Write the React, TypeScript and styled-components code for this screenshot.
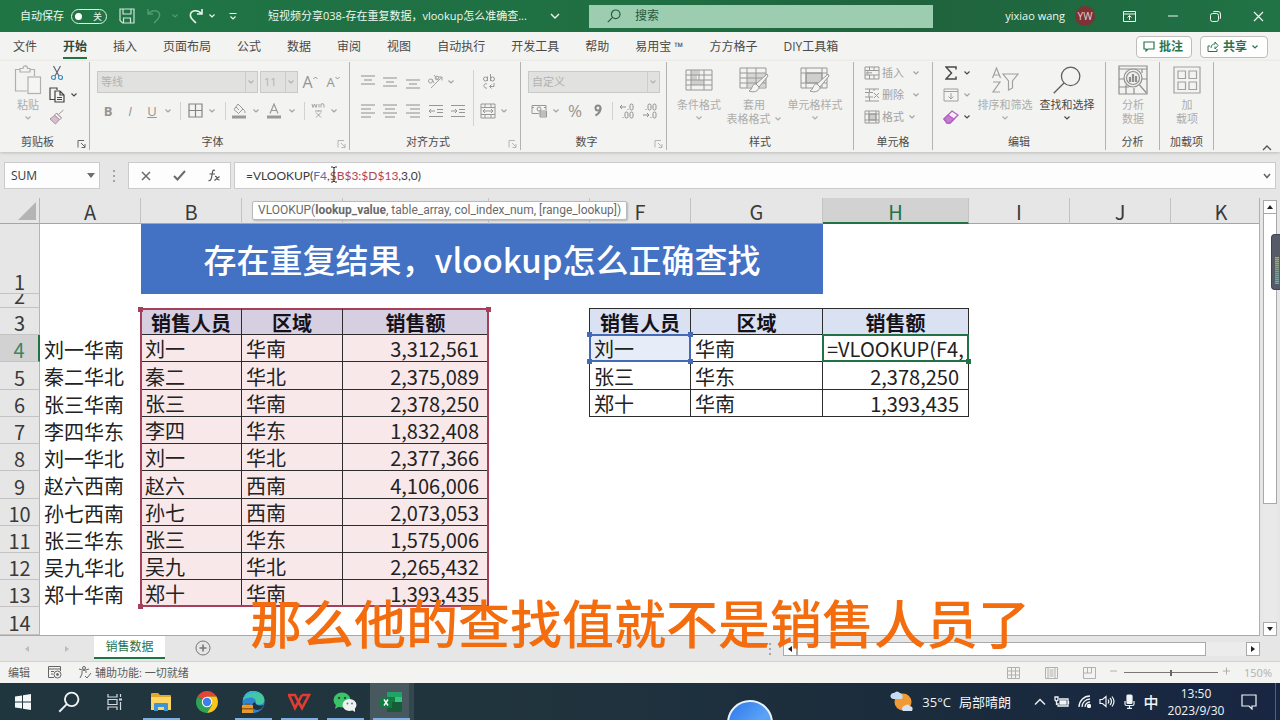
import React, { type ReactNode } from 'react';
import styled, { createGlobalStyle, css } from 'styled-components';

const GlobalStyle = createGlobalStyle`
  * { box-sizing: border-box; }
  html, body { margin: 0; height: 100%; }
  #root { height: 100%; }
  body {
    font-family: "Open Sans", "Noto Sans CJK SC", sans-serif;
    font-size: 12px;
    line-height: 16px;
    color: #3b3b3b;
  }
  button, input { font: inherit; color: inherit; }
  button { background: none; border: 0; padding: 0; cursor: pointer; }
`;

const GREEN = '#217346';
const DIM = '#adadab';

/* ---------- icons ---------- */

type IconProps = { w: number; h?: number; color?: string; sw?: number; children: ReactNode };

const Icon = ({ w, h = w, color = 'currentColor', sw = 1, children }: IconProps) => (
  <svg width={w} height={h} viewBox={`0 0 ${w} ${h}`} fill="none" stroke={color} strokeWidth={sw} aria-hidden="true">
    {children}
  </svg>
);

const Chevron = ({ color = 'currentColor' }: { color?: string }) => (
  <Icon w={8} h={6} color={color} sw={1.2}><path d="M1.5 1.5 4 4l2.500-2.500" /></Icon>
);

const Lines = ({ rows }: { rows: [number, number, number][] }) => (
  <Icon w={16} h={16} color="#8f8f8d">
    {rows.map(([x1, x2, y]) => <path key={y} d={`M${x1} ${y}H${x2}`} />)}
  </Icon>
);

const SaveIcon = () => (
  <Icon w={16} color="#cfe6d8" sw={1.2}><path d="M1 1h14v14H3.500L1 12.500zM4 1v5h8V1M4.500 15v-5h7v5" /></Icon>
);
const UndoIcon = () => (
  <Icon w={16} color="#4f9a70" sw={1.5}><path d="M2 1v5h5M2.500 6C5 2 12 1.500 13.500 6c1 3.500-2 5.500-5.500 9" /></Icon>
);
const RedoIcon = () => (
  <Icon w={16} color="#e4f3ea" sw={1.6}><path d="M14 1v5H9M13.500 6C11 2 4 1.500 2.500 6c-1 3.500 2 5.500 5.500 9" /></Icon>
);
const SearchIcon = ({ size = 14, color = '#245f3f', sw = 1.2 }: { size?: number; color?: string; sw?: number }) => (
  <svg width={size} height={size} viewBox="0 0 14 14" fill="none" stroke={color} strokeWidth={sw} aria-hidden="true">
    <circle cx="8.700" cy="5.300" r="4.300" /><path d="M5.600 8.400.800 13.200" />
  </svg>
);

const PasteIcon = () => (
  <Icon w={28} h={30} color="#b0b0ae" sw={1.2}>
    <path d="M13 26H1.500V4.500H6M16 4.500h4.500V11M6 7V3.500h3C9 0 13.500 0 13.500 3.500H16V7z" />
    <rect x="14" y="12" width="12.500" height="16.500" fill="#f5f6f4" />
  </Icon>
);
const CutIcon = () => (
  <Icon w={14} h={16} color="#5d6670" sw={1.2}>
    <path d="M3.500 1 9 11M10.500 1 5 11" />
    <circle cx="3.500" cy="12.500" r="2" stroke="#3d8fc4" /><circle cx="10.500" cy="12.500" r="2" stroke="#3d8fc4" />
  </Icon>
);
const CopyIcon = () => (
  <Icon w={16} h={16} color="#444" sw={1.2}>
    <path d="M5.500 12.500H1V1h7v2M6 4h5l4 4v7H6zM11 4v4h4M8 10.500h5M8 12.500h5" />
  </Icon>
);
const BrushIcon = () => (
  <Icon w={16} h={16} color="#a3969d">
    <path d="M14.500 1 10 5M7.500 4l5 5M7.500 4 5.500 6l5 5 2-2z" />
    <path d="M5.500 6.500 1 10l5.500 5 4-4.500z" fill="#dcbccb" />
  </Icon>
);
const BordersIcon = () => (
  <Icon w={15} color="#858583" sw={1.2}><path d="M1 1h13v13H1zM7.500 1v13M1 7.500h13" /></Icon>
);
const FillIcon = () => (
  <Icon w={16} h={16} color="#999997">
    <path d="m7 1 5 5-4.500 4.500L3 6.500zM5 4l3 3M12 6c2 2 2.500 3 1.500 4" /><path d="M1 14h14" strokeWidth={3} />
  </Icon>
);
const FontColorIcon = () => (
  <Icon w={16} h={16} color="#999997" sw={1.2}>
    <path d="M4 10.500 8 1l4 9.500M5.500 7.500h5" /><path d="M1 14h14" strokeWidth={3} />
  </Icon>
);
const OrientIcon = () => (
  <Icon w={18} h={16} color="#a2a2a0">
    <path d="M4 14 15 3M11.500 3H15v3.500" /><circle cx="3.500" cy="7" r="2" /><path d="m5 5 2 4M7 1l4 5" /><circle cx="10" cy="4" r="1.800" />
  </Icon>
);
const IndentIcon = ({ flip }: { flip?: boolean }) => (
  <Icon w={16} h={16} color="#979795">
    <path d="M1 2.500h14M9 6.500h6M9 9.500h6M1 13.500h14" />
    <path d={flip ? 'M1 8h6M5 6l2 2-2 2' : 'M7 8H1M3 6 1 8l2 2'} />
  </Icon>
);
const MergeIcon = () => (
  <Icon w={16} h={16} color="#979795"><path d="M1 1h14v14H1zM1 4.500h14M1 11.500h14M5 1v3.500M11 1v3.500M5 11.500V15M11 11.500V15M3 8h10M5 6 3 8l2 2M11 6l2 2-2 2" /></Icon>
);
const WrapIcon = () => (
  <Icon w={14} h={16} color="#979795">
    <circle cx="3.500" cy="5" r="2" /><path d="M5.500 2.500V7M8.500 0v7" /><circle cx="10.500" cy="5" r="2" />
    <path d="M5 10c-4-1.500-4 5 0 4M12 9v3.500H8M9.500 10.500 7.500 12.500l2 2" />
  </Icon>
);
const MoneyIcon = () => (
  <Icon w={17} h={14} color="#979795">
    <path d="M8 9.500H1v-8h14V6M1 3.500h2M13 3.500h2" /><circle cx="8" cy="5" r="2" />
    <path d="M9 7h6.500v6H9zM9 9h6.500M9 11h6.500" fill="#e5e5e3" />
  </Icon>
);
const CondIcon = () => (
  <Icon w={28} h={22} color="#979795">
    <path d="M6 1h9v5H6zM6 11h13v5H6zM6 6h6v5H6z" fill="#cfcfcd" stroke="none" />
    <path d="M1 1h26v20H1zM1 6h26M1 11h26M1 16h26M6 1v20M14 6v5M19 1v20" />
  </Icon>
);
const TableStyleIcon = () => (
  <Icon w={30} h={26} color="#979795">
    <path d="M8 6h19v14H8z" fill="#d6d6d4" stroke="none" />
    <path d="M1 1h26v20H1zM1 6h26M1 11h26M1 16h26M8 1v20M17 1v20" />
    <path d="m28 7-11 10 3 3L29 9zM17 17c-4-1-3 5-7 7 5 2 10 0 10-4z" fill="#f4f4f2" />
  </Icon>
);
const CellStyleIcon = () => (
  <Icon w={30} h={26} color="#979795">
    <path d="M6 6h16v10H6z" fill="#cfcfcd" />
    <path d="M1 1h26v20H1zM1 6h26M1 16h26M6 1v20M22 1v20" />
    <path d="m28 7-11 10 3 3L29 9zM17 17c-4-1-3 5-7 7 5 2 10 0 10-4z" fill="#f4f4f2" />
  </Icon>
);
const InsertCellsIcon = () => (
  <Icon w={16} h={14} color="#999997"><path d="M1 1h14v12H1zM1 4.500h14M1 9h14M5.500 1v3.500M10 1v3.500M5.500 9v4M10 9v4M8 6.800H2.500M4.500 5 2.500 6.800l2 2" /></Icon>
);
const DeleteCellsIcon = () => (
  <Icon w={16} h={14} color="#999997"><path d="M1 1h14M1 4.500h8M1 9h8M1 13h14M5.500 1v3.500M10 1v2M5.500 9v4M5 5v4M10 5l5 5M15 5l-5 5" /></Icon>
);
const FormatCellsIcon = () => (
  <Icon w={16} h={14} color="#999997"><path d="M5 4h7v6H5z" fill="#cdcdcb" /><path d="M1 1h14v12H1zM1 4h14M1 10h14M5 1v12M12 1v12" /></Icon>
);
const FillDownIcon = () => (
  <Icon w={16} h={14} color="#a0a09e"><path d="M1 1h14v12H1zM1 3.500h14M8 5v6M5.500 8.500 8 11l2.500-2.500" /></Icon>
);
const EraserIcon = () => (
  <Icon w={16} h={14} color="#b263c0" sw={1.3}>
    <path d="M1 9 9 1l6 4-8 8H4z" fill="#f8eef9" /><path d="M1 9 5 5l6 4-4 4H4z" fill="#c47bd0" />
  </Icon>
);
const SortIcon = () => (
  <Icon w={28} h={28} color="#a0a09e" sw={1.2}>
    <path d="M1.500 12 5.500 2l4 10M3 9h5M2 16h7L2 26h7" /><path d="M12 8h15l-5.500 7v7l-4 2v-9z" />
  </Icon>
);
const AnalyzeIcon = () => (
  <Icon w={30} h={30} color="#8f8f8d" sw={1.2}>
    <path d="M1 1h28v28H1zM1 4h28M1 14h5M24 14h5M1 22h10M8 20v9M16 23v6M24 4v4" />
    <circle cx="15" cy="13" r="9" fill="#f0f0ee" /><circle cx="15" cy="13" r="6.500" />
    <path d="M12 12v5M15 9v8M18 11v6" strokeWidth={2.2} /><path d="m21.500 20 7 8" />
  </Icon>
);
const AddinsIcon = () => (
  <Icon w={28} h={28} color="#a2a2a0" sw={1.2}><path d="M1 1h26v26H1zM5 5h7.500v7.500H5zM16 5h7.500v7.500H16zM5 16h7.500v7.500H5zM16 16h7.500v7.500H16z" /></Icon>
);

/* ---------- title bar ---------- */

const Page = styled.div`
  display: flex;
  flex-direction: column;
  height: 100vh;
  overflow: hidden;
  position: relative;
  background: #e6e6e6;
`;

const TitleBar = styled.header`
  flex: none;
  display: flex;
  align-items: center;
  height: 32px;
  background: linear-gradient(90deg, #207545, #1f6f43 50%, #1f633c 72%, #217346);
  color: #eef7f1;
  font-size: 11px;
`;

const QuickAccess = styled.div`
  flex: none;
  display: flex;
  align-items: center;
  width: 268px;
  padding-left: 20px;
`;

const AutoSave = styled.label`
  display: flex;
  align-items: center;
  gap: 7px;
  margin-right: 4px;
`;

const Toggle = styled.input`
  appearance: none;
  position: relative;
  width: 36px;
  height: 15px;
  margin: 0;
  border: 1px solid #e3f1e8;
  border-radius: 8px;
  &::before {
    content: "";
    position: absolute;
    left: 3px;
    top: 3px;
    width: 7px;
    height: 7px;
    border-radius: 50%;
    background: #fff;
  }
  &::after {
    content: "关";
    position: absolute;
    right: 4px;
    top: 0;
    font-size: 9px;
    line-height: 13px;
  }
`;

const BarButton = styled.button<{ $w: number }>`
  flex: none;
  display: flex;
  align-items: center;
  justify-content: center;
  width: ${p => p.$w}px;
  height: 24px;
`;

const DocTitle = styled.div`
  flex: none;
  display: flex;
  align-items: center;
  justify-content: space-between;
  width: 321px;
  padding-right: 29px;
  white-space: nowrap;
`;

const SearchBox = styled.label`
  flex: 0 1 344px;
  display: flex;
  align-items: center;
  gap: 14px;
  height: 23px;
  padding-left: 18px;
  background: #9dcdb0;
  color: #235f3f;
`;

const SearchInput = styled.input`
  flex: 1;
  min-width: 0;
  border: 0;
  background: none;
  padding: 0;
  font-size: 12px;
  &::placeholder { color: #24593d; opacity: 1; }
`;

const Account = styled.div`
  display: flex;
  align-items: center;
  gap: 10px;
  margin-left: auto;
  padding-right: 13px;
`;

const Avatar = styled.span`
  display: grid;
  place-items: center;
  width: 20px;
  height: 20px;
  border-radius: 50%;
  background: #7c3237;
  color: #e8cfcf;
  font-size: 10px;
`;

/* ---------- ribbon ---------- */

const TabRow = styled.nav`
  flex: none;
  display: flex;
  align-items: center;
  gap: 26px;
  height: 29px;
  padding: 0 12px 0 13px;
  background: #f3f3f1;
`;

const RibbonTab = styled.a<{ $active?: boolean }>`
  display: block;
  padding: 5px 0 2px;
  border-bottom: 2px solid ${p => (p.$active ? GREEN : 'transparent')};
  font-weight: ${p => (p.$active ? 700 : 400)};
  color: ${p => (p.$active ? '#2b4a39' : '#4a4a48')};
  text-decoration: none;
  white-space: nowrap;
`;

const TabActions = styled.div`
  display: flex;
  gap: 8px;
  margin-left: auto;
`;

const ActionButton = styled.button`
  display: flex;
  align-items: center;
  gap: 4px;
  height: 22px;
  padding: 0 8px 0 6px;
  border: 1px solid #bdbdbb;
  border-radius: 4px;
  background: #fdfefd;
  color: #2a7550;
  font-weight: 700;
`;

const Ribbon = styled.section`
  flex: none;
  display: flex;
  height: 91px;
  padding-top: 1px;
  background: #f3f3f1;
  box-shadow: 0 1px 3px #bcbcba;
  position: relative;
`;

const Group = styled.div<{ $w: number }>`
  flex: none;
  position: relative;
  display: flex;
  flex-direction: column;
  width: ${p => p.$w}px;
  height: 88px;
  border-right: 1px solid #b3b3b1;
`;

const GroupBody = styled.div<{ $left: number }>`
  flex: none;
  display: flex;
  height: 72px;
  padding-left: ${p => p.$left}px;
`;

const GroupLabel = styled.div`
  padding-right: 14px;
  text-align: center;
  font-size: 11px;
  line-height: 16px;
  white-space: nowrap;
  color: #4c4c4a;
`;

const WideLabel = styled(GroupLabel)`
  padding-right: 0;
`;

const Launcher = styled.button<{ $dim?: boolean }>`
  position: absolute;
  right: 2px;
  bottom: 2px;
  width: 10px;
  height: 8px;
  display: grid;
  color: ${p => (p.$dim ? '#b5b5b3' : '#666')};
`;

const LauncherButton = ({ dim }: { dim?: boolean }) => (
  <Launcher $dim={dim} aria-label="更多选项">
    <Icon w={10} h={8}><path d="M1 7.500v-7h6M4 3l4 4M8 4v3.500H4.500" /></Icon>
  </Launcher>
);

const Stack = styled.div<{ $rowH: number; $top?: number }>`
  display: grid;
  grid-auto-rows: ${p => p.$rowH}px;
  align-content: start;
  padding-top: ${p => p.$top ?? 0}px;
`;

const ToolRow = styled.div`
  display: flex;
  align-items: center;
`;

const Tool = styled.button<{ $w: number; $on?: boolean }>`
  flex: none;
  display: flex;
  align-items: center;
  justify-content: center;
  width: ${p => p.$w}px;
  height: 22px;
  color: ${p => (p.$on ? '#4a4a48' : '#a3a3a1')};
  font-size: 11px;
  white-space: nowrap;
`;

const Glyph = styled(Tool)<{ $size: number }>`
  font-size: ${p => p.$size}px;
  color: #959593;
`;

const Divider = styled.span<{ $w: number; $h?: number }>`
  flex: none;
  width: ${p => p.$w}px;
  height: ${p => p.$h ?? 18}px;
  background: linear-gradient(#d2d2d0, #d2d2d0) center / 1px 100% no-repeat;
`;

const Combo = styled.button<{ $w: number }>`
  flex: none;
  display: flex;
  align-items: center;
  justify-content: space-between;
  width: ${p => p.$w}px;
  height: 22px;
  margin-right: 2px;
  padding: 0 1px 0 3px;
  border: 1px solid #c9c9c7;
  background: #e1e1df;
  color: #b2b2b0;
  font-size: 11px;
  & > svg { width: 11px; height: 20px; padding: 7px 1px; border-left: 1px solid #cdcdcb; }
`;

const BigTool = styled.button<{ $w: number; $on?: boolean }>`
  flex: none;
  display: flex;
  flex-direction: column;
  align-items: center;
  width: ${p => p.$w}px;
  color: ${p => (p.$on ? '#4a4a48' : DIM)};
  font-size: 11px;
  line-height: 14px;
  white-space: nowrap;
`;

const BigIcon = styled.span`
  display: grid;
  place-items: center;
  height: 36px;
`;

const BigChevron = styled.span`
  display: grid;
  place-items: center;
  height: 12px;
`;

const Inline = styled.span`
  display: flex;
  align-items: center;
  gap: 3px;
`;

const Collapse = styled.button`
  margin: auto 6px 0 auto;
  width: 14px;
  height: 12px;
`;

/* ---------- formula bar ---------- */

const FormulaBar = styled.div`
  flex: none;
  position: relative;
  z-index: 2;
  display: flex;
  padding: 10px 4px 0;
  height: 46px;
`;

const NameBox = styled.div`
  display: flex;
  align-items: center;
  width: 96px;
  height: 27px;
  padding: 0 4px 0 6px;
  border: 1px solid #cbcbcb;
  background: #fdfdfd;
`;

const NameInput = styled.input`
  flex: 1;
  min-width: 0;
  border: 0;
  padding: 0;
  background: none;
  font-size: 12px;
`;

const Grip = styled.span`
  width: 28px;
  height: 27px;
  display: grid;
  place-items: center;
  color: #a5a5a5;
`;

const FormulaButtons = styled.div`
  display: flex;
  align-items: center;
  width: 103px;
  height: 27px;
  margin-right: 3px;
  border: 1px solid #cbcbcb;
  background: #fdfdfd;
  & > button { flex: 1; display: grid; place-items: center; }
`;

const FormulaBox = styled.div`
  flex: 1;
  position: relative;
  display: flex;
  align-items: center;
  justify-content: space-between;
  height: 27px;
  padding: 0 4px 0 11px;
  border: 1px solid #cbcbcb;
  background: #fdfdfd;
  font-family: Lato, "Noto Sans CJK SC", sans-serif;
  font-size: 12px;
`;

const RefText = styled.span<{ $c: string }>`
  color: ${p => p.$c};
`;

const Hint = styled.div`
  position: absolute;
  left: 17px;
  top: 38px;
  padding: 0 5px;
  border: 1px solid #b9b9b9;
  border-radius: 2px;
  background: #fff;
  box-shadow: 1px 1px 2px #b5b5b5;
  font-family: Roboto, sans-serif;
  font-size: 12px;
  line-height: 17px;
  color: #6a6a6a;
  white-space: nowrap;
`;

const Caret = styled.span`
  position: absolute;
  left: 95px;
  top: 3px;
  display: grid;
`;

/* ---------- worksheet ---------- */

const Sheet = styled.main`
  flex: 1;
  display: flex;
  min-height: 0;
`;

const GridPane = styled.div`
  flex: 1;
  min-width: 0;
  overflow: hidden;
  background: #fff;
  border-right: 1px solid #b0b0b0;
  border-bottom: 1px solid #a8a8a8;
`;

const GridTable = styled.table`
  width: 100%;
  table-layout: fixed;
  border-collapse: separate;
  border-spacing: 0;
  font-family: "Noto Sans CJK SC", sans-serif;
  font-size: 20px;
  line-height: 24px;
  color: #222;
`;

const Corner = styled.th`
  padding: 0 3px 3px 0;
  background: #e6e6e6;
  border-bottom: 1px solid #a5a5a5;
  border-right: 1px solid #b5b5b5;
  vertical-align: bottom;
  text-align: right;
  line-height: 0;
`;

const ColHead = styled.th<{ $active?: boolean }>`
  height: 26px;
  padding: 3px 0 0;
  vertical-align: top;
  line-height: 21px;
  font-weight: 400;
  color: ${p => (p.$active ? GREEN : '#3a3a3a')};
  background: ${p => (p.$active ? '#d2d2d2' : '#e6e6e6')};
  border-right: 1px solid #c3c3c3;
  border-bottom: ${p => (p.$active ? `2px solid ${GREEN}` : '1px solid #a5a5a5')};
`;

const RowHead = styled.th<{ $active?: boolean }>`
  padding: 0;
  font-weight: 400;
  color: ${p => (p.$active ? '#3f8560' : '#3a3a3a')};
  background: ${p => (p.$active ? '#d2d2d2' : '#e6e6e6')};
  border-right: ${p => (p.$active ? `2px solid ${GREEN}` : '1px solid #b5b5b5')};
  border-bottom: 1px solid #c3c3c3;
`;

/* A row shorter than its number cuts the number off at the top. */
const RowNumber = styled.div<{ $h: number }>`
  display: flex;
  align-items: flex-end;
  justify-content: center;
  height: ${p => p.$h - 1}px;
  line-height: 22px;
  overflow: ${p => (p.$h < 22 ? 'hidden' : 'visible')};
`;

type CellKind = 'range' | 'lookup' | 'argument';

const FILLS: Record<CellKind, string> = { range: '#f8e8ea', lookup: '#fff', argument: '#e6ecf8' };

const Cell = styled.td<{ $kind?: CellKind; $align?: string }>`
  position: relative;
  padding: 2px 9px 0 4px;
  white-space: nowrap;
  text-align: ${p => p.$align ?? 'left'};
  ${p => p.$kind && css`
    border-right: 1px solid #2c2c2c;
    border-bottom: 1px solid #2c2c2c;
    background: ${FILLS[p.$kind]};
  `}
`;

/* Cells without text keep only the height of their row. */
const Blank = styled.td`
  padding: 0;
`;

const HeadCell = styled(Cell)`
  padding: 2px 0 0;
  line-height: 22px;
  text-align: center;
  font-weight: 700;
  color: #16121a;
  border-top: ${p => (p.$kind === 'range' ? '2px solid #a63f5a' : '1px solid #2c2c2c')};
  background: ${p => (p.$kind === 'range' ? '#d5cfe1' : '#d9e1f2')};
`;

const BannerCell = styled.td`
  padding: 0;
  background: #4371c4;
  color: #fff;
  text-align: center;
  font-size: 33px;
  line-height: 48px;
  font-weight: 500;
`;

/* Frame of a referenced range; each cell draws the sides that lie on the edge. */
const Edge = styled.span<{ $sides: string; $c: string }>`
  position: absolute;
  inset: -1px;
  pointer-events: none;
  border: 0 solid ${p => p.$c};
  ${p => p.$sides.includes('t') && 'border-top-width: 2px;'}
  ${p => p.$sides.includes('r') && 'border-right-width: 2px;'}
  ${p => p.$sides.includes('b') && 'border-bottom-width: 2px;'}
  ${p => p.$sides.includes('l') && 'border-left-width: 2px;'}
`;

const Handle = styled.span<{ $at: string; $c: string }>`
  position: absolute;
  z-index: 1;
  width: 5px;
  height: 5px;
  background: ${p => p.$c};
  ${p => (p.$at[0] === 't' ? 'top: -3px;' : 'bottom: -3px;')}
  ${p => (p.$at[1] === 'l' ? 'left: -3px;' : 'right: -3px;')}
`;

const OuterLeft = styled.span`
  position: absolute;
  left: -1px;
  top: -1px;
  bottom: -1px;
  width: 1px;
  background: #2c2c2c;
`;

const ScrollColumn = styled.div`
  flex: none;
  display: flex;
  flex-direction: column;
  width: 20px;
  padding: 2px 3px 0;
`;

const ScrollButton = styled.button`
  flex: none;
  display: grid;
  place-items: center;
  width: 14px;
  height: 14px;
  border: 1px solid #a9a9a9;
  background: #fff;
  color: #222;
`;

const VTrack = styled.div`
  flex: 1;
  background: #e9e9e9;
`;

const VThumb = styled.div`
  height: 71%;
  border: 1px solid #a9a9a9;
  border-top: 0;
  background: #fff;
`;

const LevelMeter = styled.div`
  position: absolute;
  right: 0;
  top: 234px;
  width: 9px;
  height: 56px;
  padding: 22px 1px 5px 3px;
  border: 1px solid #3f4450;
  border-right: 0;
  border-radius: 4px 0 0 4px;
  background: #565b68;
  & > i {
    display: block;
    height: 100%;
    background:
      repeating-linear-gradient(transparent 0 1px, #565b6888 1px 2px),
      linear-gradient(#a6b34a, #6ea58a 60%, #64b0b0);
  }
`;

/* ---------- sheet tabs and status ---------- */

const SheetTabs = styled.div`
  flex: none;
  display: flex;
  align-items: flex-start;
  height: 26px;
  padding-right: 20px;
  border-bottom: 1px solid #d2d2d0;
`;

const TabArrow = styled.button<{ $w: number }>`
  width: ${p => p.$w}px;
  height: 24px;
  color: #bcbcbc;
`;

const SheetTab = styled.button`
  width: 71px;
  height: 23px;
  margin: 0 30px 0 14px;
  border-bottom: 2px solid ${GREEN};
  background: #fff;
  color: #2b7048;
  line-height: 20px;
`;

const AddSheet = styled.button`
  display: grid;
  place-items: center;
  width: 16px;
  height: 24px;
  color: #777;
`;

const HScroll = styled.div`
  display: flex;
  align-items: center;
  width: 497px;
  max-width: 50%;
  margin-left: auto;
  padding-top: 6px;
`;

const HTrack = styled.div`
  flex: 1;
  height: 14px;
  background: #ececec;
`;

const HThumb = styled.div`
  width: 91%;
  height: 14px;
  border: 1px solid #a9a9a9;
  background: #fff;
`;

const StatusBar = styled.footer`
  flex: none;
  display: flex;
  align-items: center;
  height: 21px;
  padding: 0 8px;
  background: #f3f3f1;
  font-size: 11px;
  color: #5b5b59;
`;

const StatusIcon = styled.span<{ $ml: number }>`
  display: grid;
  margin-left: ${p => p.$ml}px;
`;

const StatusRight = styled.div`
  display: flex;
  align-items: center;
  margin-left: auto;
  color: #b0b0ae;
`;

const ViewButton = styled.button`
  display: grid;
  place-items: center;
  width: 38px;
  height: 18px;
`;

const ZoomSlider = styled.input`
  appearance: none;
  width: 94px;
  height: 12px;
  margin: 0 4px;
  background: linear-gradient(#777, #777) center / 100% 1px no-repeat;
  &::-webkit-slider-thumb {
    appearance: none;
    width: 2px;
    height: 6px;
    background: #666;
  }
`;

const ZoomValue = styled.span`
  margin-left: 12px;
`;

/* ---------- taskbar ---------- */

const Taskbar = styled.div`
  flex: none;
  position: relative;
  display: flex;
  align-items: center;
  height: 37px;
  background: linear-gradient(90deg, #20363e, #20343e 40%, #1b2c3c 70%, #182643);
  color: #f0f4f6;
  overflow: hidden;
`;

const TaskButton = styled.button<{ $open?: boolean; $active?: boolean }>`
  flex: none;
  display: grid;
  place-items: center;
  width: 46px;
  height: 37px;
  position: relative;
  ${p => p.$active && css`background: linear-gradient(90deg, transparent 2px, #47585f 2px 41px, #34464e 41px);`}
  ${p => p.$open && css`
    &::after {
      content: "";
      position: absolute;
      left: 5px;
      right: 4px;
      bottom: 0;
      height: 2px;
      background: #7fb0e6;
    }
  `}
`;

const AssistantBall = styled.div`
  position: absolute;
  left: 727px;
  top: 17px;
  width: 46px;
  height: 46px;
  border: 2px solid #e9f2fb;
  border-radius: 50%;
  background: linear-gradient(135deg, #2d77ea, #5ba4f8 60%, #3f8bf2);
`;

const Tray = styled.div`
  display: flex;
  align-items: center;
  margin-left: auto;
`;

const Weather = styled.button`
  display: flex;
  align-items: center;
  gap: 8px;
  margin-right: 18px;
  font-size: 13px;
  white-space: nowrap;
`;

const TrayButton = styled.button<{ $w: number }>`
  display: grid;
  place-items: center;
  width: ${p => p.$w}px;
  height: 37px;
  font-size: 15px;
  font-weight: 500;
`;

const Clock = styled.div`
  width: 68px;
  text-align: center;
  font-size: 12px;
  line-height: 17px;
`;

const ShowDesktop = styled.button`
  width: 5px;
  height: 37px;
  border-left: 1px solid #54617a;
`;

const Caption = styled.p`
  position: absolute;
  left: 0;
  right: 0;
  bottom: 63px;
  margin: 0;
  text-align: center;
  font-family: "Noto Sans CJK SC", sans-serif;
  font-size: 52px;
  line-height: 70px;
  font-weight: 500;
  color: #f36c0e;
  pointer-events: none;
  white-space: nowrap;
`;

/* ---------- data ---------- */

const TABS = ['文件', '开始', '插入', '页面布局', '公式', '数据', '审阅', '视图', '自动执行', '开发工具', '帮助', '易用宝 ™', '方方格子', 'DIY工具箱'];

const COLUMNS: [string, number][] = [
  ['A', 101], ['B', 101], ['C', 101], ['D', 146], ['E', 101], ['F', 101],
  ['G', 132], ['H', 146], ['I', 101], ['J', 101], ['K', 101],
];

const SALES: [string, string, string][] = [
  ['刘一', '华南', '3,312,561'],
  ['秦二', '华北', '2,375,089'],
  ['张三', '华南', '2,378,250'],
  ['李四', '华东', '1,832,408'],
  ['刘一', '华北', '2,377,366'],
  ['赵六', '西南', '4,106,006'],
  ['孙七', '西南', '2,073,053'],
  ['张三', '华东', '1,575,006'],
  ['吴九', '华北', '2,265,432'],
  ['郑十', '华南', '1,393,435'],
];

const LOOKUPS: [string, string, string][] = [
  ['刘一', '华南', '=VLOOKUP(F4,'],
  ['张三', '华东', '2,378,250'],
  ['郑十', '华南', '1,393,435'],
];

const ROW_HEIGHTS = [27, 28, 27, 27, 27, 28, 27, 27, 27, 27];

const RED = '#a63f5a';
const BLUE = '#4469b5';

/* ---------- sections ---------- */

const TopBar = () => (
  <TitleBar>
    <QuickAccess>
      <AutoSave>自动保存<Toggle type="checkbox" /></AutoSave>
      <BarButton $w={32} aria-label="保存"><SaveIcon /></BarButton>
      <BarButton $w={22} aria-label="撤消"><UndoIcon /></BarButton>
      <BarButton $w={20} aria-label="撤消列表"><Chevron color="#4f9a70" /></BarButton>
      <BarButton $w={22} aria-label="恢复"><RedoIcon /></BarButton>
      <BarButton $w={10} aria-label="恢复列表"><Chevron /></BarButton>
      <BarButton $w={32} aria-label="自定义快速访问工具栏">
        <Icon w={10} h={9} sw={1.2}><path d="M1.500 1.500h7M2.500 4.500 5 7l2.500-2.500" /></Icon>
      </BarButton>
    </QuickAccess>
    <DocTitle>
      短视频分享038-存在重复数据，vlookup怎么准确查...
      <Icon w={10} h={8} sw={1.4}><path d="m1 2 4 4 4-4" /></Icon>
    </DocTitle>
    <SearchBox>
      <SearchIcon />
      <SearchInput placeholder="搜索" aria-label="搜索" />
    </SearchBox>
    <Account>yixiao wang<Avatar>YW</Avatar></Account>
    <BarButton $w={43} aria-label="功能区显示选项">
      <Icon w={13} h={11}><path d="M.5.5h12v10H.5zM.5 3h12M6.500 9V4.500M4.500 6.500l2-2 2 2" /></Icon>
    </BarButton>
    <BarButton $w={43} aria-label="最小化"><Icon w={10} h={2}><path d="M0 1h10" /></Icon></BarButton>
    <BarButton $w={43} aria-label="还原">
      <Icon w={11}><rect x=".5" y="2.500" width="8" height="8" rx="2" /><path d="M3 1q.5-.5 2-.5h3q2.500 0 2.500 2.500v3q0 1.500-.5 2" /></Icon>
    </BarButton>
    <BarButton $w={43} aria-label="关闭"><Icon w={11} sw={1.2}><path d="m1 1 9 9M10 1l-9 9" /></Icon></BarButton>
  </TitleBar>
);

const Tabs = () => (
  <TabRow>
    {TABS.map(t => <RibbonTab key={t} href="#" $active={t === '开始'}>{t}</RibbonTab>)}
    <TabActions>
      <ActionButton>
        <Icon w={12} h={11} sw={1.2}><path d="M1 1h10v7H5l-2 2V8H1z" /></Icon>批注
      </ActionButton>
      <ActionButton>
        <Icon w={12} h={11}><path d="M3 5H1v5.500h9V8M4 7c0-3 2-4 4-4V1l3 3.500L8 8V5.500" /></Icon>共享
        <Chevron />
      </ActionButton>
    </TabActions>
  </TabRow>
);

const RibbonBar = () => (
  <Ribbon>
    <Group $w={90}>
      <GroupBody $left={12}>
        <BigTool $w={32}><BigIcon><PasteIcon /></BigIcon>粘贴<BigChevron><Chevron /></BigChevron></BigTool>
        <Stack $rowH={22}>
          <ToolRow><Tool $w={26} $on aria-label="剪切"><CutIcon /></Tool></ToolRow>
          <ToolRow><Tool $w={26} $on aria-label="复制"><CopyIcon /></Tool><Tool $w={8} $on aria-label="复制选项"><Chevron /></Tool></ToolRow>
          <ToolRow><Tool $w={26} aria-label="格式刷"><BrushIcon /></Tool></ToolRow>
        </Stack>
      </GroupBody>
      <GroupLabel>剪贴板</GroupLabel>
      <LauncherButton />
    </Group>

    <Group $w={260}>
      <GroupBody $left={7}>
        <Stack $rowH={29} $top={5}>
          <ToolRow>
            <Combo $w={161}>等线<Chevron /></Combo>
            <Combo $w={38}>11<Chevron /></Combo>
            <Glyph $w={20} $size={16}>A<Icon w={5} h={12}><path d="m.5 3 2-2 2 2" /></Icon></Glyph>
            <Glyph $w={26} $size={13}>A<Icon w={5} h={12}><path d="m.5 1 2 2 2-2" /></Icon></Glyph>
          </ToolRow>
          <ToolRow>
            <Glyph $w={22} $size={13}><b>B</b></Glyph>
            <Glyph $w={22} $size={13}><i>I</i></Glyph>
            <Glyph $w={22} $size={13}><u>U</u></Glyph>
            <Tool $w={10} aria-label="下划线选项"><Chevron /></Tool>
            <Divider $w={14} />
            <Tool $w={16} aria-label="边框"><BordersIcon /></Tool>
            <Tool $w={18} aria-label="边框选项"><Chevron /></Tool>
            <Divider $w={8} />
            <Tool $w={20} aria-label="填充颜色"><FillIcon /></Tool>
            <Tool $w={14} aria-label="填充选项"><Chevron /></Tool>
            <Tool $w={22} aria-label="字体颜色"><FontColorIcon /></Tool>
            <Tool $w={14} aria-label="颜色选项"><Chevron /></Tool>
            <Divider $w={10} />
            <Tool $w={18} aria-label="拼音指南">
              <Icon w={14} h={16}><path d="m1 1 1 3.500L3.500 1 5 4.500 6 1M8 1v3.500M10 4.500V1q3-1 3 1v2.500M4 8h7M7.500 7v1M5 9.500l5 5M10 9.500l-5 5" /></Icon>
            </Tool>
            <Tool $w={14} aria-label="拼音选项"><Chevron /></Tool>
          </ToolRow>
        </Stack>
      </GroupBody>
      <GroupLabel>字体</GroupLabel>
      <LauncherButton dim />
    </Group>

    <Group $w={171}>
      <GroupBody $left={7}>
        <Stack $rowH={29} $top={5}>
          <ToolRow>
            <Tool $w={22} aria-label="顶端对齐"><Lines rows={[[1, 15, 2], [4, 12, 6], [1, 15, 10]]} /></Tool>
            <Tool $w={22} aria-label="垂直居中"><Lines rows={[[1, 15, 4], [4, 12, 8], [1, 15, 12]]} /></Tool>
            <Tool $w={24} aria-label="底端对齐"><Lines rows={[[1, 15, 6], [4, 12, 10], [1, 15, 14]]} /></Tool>
            <Tool $w={22} aria-label="方向"><OrientIcon /></Tool>
            <Tool $w={8} aria-label="方向选项"><Chevron /></Tool>
          </ToolRow>
          <ToolRow>
            <Tool $w={22} aria-label="左对齐"><Lines rows={[[1, 15, 2], [1, 11, 6], [1, 15, 10], [1, 11, 14]]} /></Tool>
            <Tool $w={22} aria-label="居中"><Lines rows={[[1, 15, 2], [3, 13, 6], [1, 15, 10], [3, 13, 14]]} /></Tool>
            <Tool $w={24} aria-label="右对齐"><Lines rows={[[1, 15, 2], [5, 15, 6], [1, 15, 10], [5, 15, 14]]} /></Tool>
            <Tool $w={22} aria-label="减少缩进"><IndentIcon /></Tool>
            <Tool $w={22} aria-label="增加缩进"><IndentIcon flip /></Tool>
          </ToolRow>
        </Stack>
        <ToolRow><Divider $w={9} $h={56} /></ToolRow>
        <Stack $rowH={29} $top={5}>
          <ToolRow><Tool $w={22} aria-label="自动换行"><WrapIcon /></Tool></ToolRow>
          <ToolRow><Tool $w={20} aria-label="合并后居中"><MergeIcon /></Tool><Tool $w={12} aria-label="合并选项"><Chevron /></Tool></ToolRow>
        </Stack>
      </GroupBody>
      <GroupLabel>对齐方式</GroupLabel>
      <LauncherButton dim />
    </Group>

    <Group $w={146}>
      <GroupBody $left={7}>
        <Stack $rowH={29} $top={5}>
          <ToolRow><Combo $w={132}>自定义<Chevron /></Combo></ToolRow>
          <ToolRow>
            <Tool $w={22} aria-label="会计数字格式"><MoneyIcon /></Tool>
            <Tool $w={12} aria-label="会计格式选项"><Chevron /></Tool>
            <Glyph $w={26} $size={17}>%</Glyph>
            <Tool $w={20} aria-label="千位分隔样式">
              <Icon w={8} h={13} color="#8a8a88"><circle cx="4" cy="4" r="2.500" strokeWidth={2} /><path d="M6.500 4q0 5-5 7.500" strokeWidth={2} /></Icon>
            </Tool>
            <Divider $w={8} />
            <Tool $w={22} aria-label="增加小数位数">
              <Icon w={16} h={16} color="#8f8f8d"><path d="M7 4H1M3 2 1 4l2 2M9 6v1" /><rect x="11" y="1" width="3" height="6" rx="1.500" /><path d="M4 14v1" /><rect x="6" y="9" width="3" height="6" rx="1.500" /><rect x="11" y="9" width="3" height="6" rx="1.500" /></Icon>
            </Tool>
            <Tool $w={24} aria-label="减少小数位数">
              <Icon w={16} h={16} color="#8f8f8d"><path d="M1 12h6M5 10l2 2-2 2M4 6v1M9 14v1" /><rect x="6" y="1" width="3" height="6" rx="1.500" /><rect x="11" y="1" width="3" height="6" rx="1.500" /><rect x="11" y="9" width="3" height="6" rx="1.500" /></Icon>
            </Tool>
          </ToolRow>
        </Stack>
      </GroupBody>
      <GroupLabel>数字</GroupLabel>
      <LauncherButton dim />
    </Group>

    <Group $w={187}>
      <GroupBody $left={6}>
        <BigTool $w={52}><BigIcon><CondIcon /></BigIcon>条件格式<BigChevron><Chevron /></BigChevron></BigTool>
        <BigTool $w={58}><BigIcon><TableStyleIcon /></BigIcon>套用<Inline>表格格式<Chevron /></Inline></BigTool>
        <BigTool $w={64}><BigIcon><CellStyleIcon /></BigIcon>单元格样式<BigChevron><Chevron /></BigChevron></BigTool>
      </GroupBody>
      <WideLabel>样式</WideLabel>
    </Group>

    <Group $w={79}>
      <GroupBody $left={9}>
        <Stack $rowH={22}>
          <ToolRow><Tool $w={18} aria-label="插入单元格"><InsertCellsIcon /></Tool><Tool $w={24}>插入</Tool><Tool $w={22} aria-label="插入选项"><Chevron /></Tool></ToolRow>
          <ToolRow><Tool $w={18} aria-label="删除单元格"><DeleteCellsIcon /></Tool><Tool $w={24}>删除</Tool><Tool $w={22} aria-label="删除选项"><Chevron /></Tool></ToolRow>
          <ToolRow><Tool $w={18} aria-label="单元格格式"><FormatCellsIcon /></Tool><Tool $w={24}>格式</Tool><Tool $w={14} aria-label="格式选项"><Chevron /></Tool></ToolRow>
        </Stack>
      </GroupBody>
      <WideLabel>单元格</WideLabel>
    </Group>

    <Group $w={173}>
      <GroupBody $left={9}>
        <Stack $rowH={22}>
          <ToolRow>
            <Tool $w={18} $on aria-label="自动求和"><Icon w={12} h={14} sw={1.5}><path d="M11 3.500V1H1l5.500 6L1 13h10v-2.500" /></Icon></Tool>
            <Tool $w={14} $on aria-label="求和选项"><Chevron /></Tool>
          </ToolRow>
          <ToolRow><Tool $w={18} aria-label="填充"><FillDownIcon /></Tool><Tool $w={14} aria-label="填充方向"><Chevron /></Tool></ToolRow>
          <ToolRow><Tool $w={18} $on aria-label="清除"><EraserIcon /></Tool><Tool $w={14} $on aria-label="清除选项"><Chevron /></Tool></ToolRow>
        </Stack>
        <BigTool $w={62}><BigIcon><SortIcon /></BigIcon>排序和筛选<BigChevron><Chevron /></BigChevron></BigTool>
        <BigTool $w={62} $on><BigIcon><SearchIcon size={30} color="#5d5d5b" sw={0.6} /></BigIcon>查找和选择<BigChevron><Chevron /></BigChevron></BigTool>
      </GroupBody>
      <WideLabel>编辑</WideLabel>
    </Group>

    <Group $w={54}>
      <GroupBody $left={5}>
        <BigTool $w={44}><BigIcon><AnalyzeIcon /></BigIcon><span>分析</span><span>数据</span></BigTool>
      </GroupBody>
      <WideLabel>分析</WideLabel>
    </Group>

    <Group $w={54}>
      <GroupBody $left={5}>
        <BigTool $w={44}><BigIcon><AddinsIcon /></BigIcon><span>加</span><span>载项</span></BigTool>
      </GroupBody>
      <WideLabel>加载项</WideLabel>
    </Group>

    <Collapse aria-label="折叠功能区"><Icon w={10} h={7} color="#555" sw={1.3}><path d="m1 5 4-4 4 4" /></Icon></Collapse>
  </Ribbon>
);

const Formula = () => (
  <FormulaBar>
    <NameBox>
      <NameInput defaultValue="SUM" aria-label="名称框" />
      <Icon w={8} h={5}><path d="M0 0h8L4 5z" fill="#6d6d6d" stroke="none" /></Icon>
    </NameBox>
    <Grip><Icon w={2} h={12} sw={2}><path d="M1 0v12" strokeDasharray="2 3" /></Icon></Grip>
    <FormulaButtons>
      <button aria-label="取消"><Icon w={10} h={10} color="#6b6b6b" sw={1.5}><path d="m1 1 8 8M9 1 1 9" /></Icon></button>
      <button aria-label="输入"><Icon w={13} h={11} color="#6b6b6b" sw={2}><path d="m1 6 3.500 3.500L12 1" /></Icon></button>
      <button aria-label="插入函数">
        <Icon w={13} h={13} color="#555" sw={1.2}><path d="M8 1.500C5.500 0 5.500 3 5 6s-1 6.500-3.500 5.500M2.500 5H8M8 7.500q1.500-.5 2 1.500t2.500 2M12.500 7.500 7.500 11.500" /></Icon>
      </button>
    </FormulaButtons>
    <FormulaBox>
      <div role="textbox" aria-label="编辑栏">
        =VLOOKUP(<RefText $c="#5273b3">F4</RefText>,<RefText $c="#ad4656">$B$3:$D$13</RefText>,3,0)
      </div>
      <Icon w={8} h={6} color="#666" sw={1.6}><path d="m1 1 3 3.500L7 1" /></Icon>
      <Caret><Icon w={8} h={17} color="#333"><path d="M1 1h2l1 1 1-1h2M4 2v13M1 16h2l1-1 1 1h2" /></Icon></Caret>
      <Hint>VLOOKUP(<b>lookup_value</b>, table_array, col_index_num, [range_lookup])</Hint>
    </FormulaBox>
  </FormulaBar>
);

const SalesCells = ({ index }: { index: number }) => {
  const [name, area, amount] = SALES[index];
  const last = index === SALES.length - 1;
  const bottom = last ? 'b' : '';
  return (
    <>
      <Cell $kind="range">{name}<Edge $sides={'l' + bottom} $c={RED} />{last && <Handle $at="bl" $c={RED} />}</Cell>
      <Cell $kind="range">{area}{last && <Edge $sides="b" $c={RED} />}</Cell>
      <Cell $kind="range" $align="right">{amount}<Edge $sides={'r' + bottom} $c={RED} /></Cell>
    </>
  );
};

const LookupCells = ({ index }: { index: number }) => {
  const [name, area, amount] = LOOKUPS[index];
  const editing = index === 0;
  return (
    <>
      <Cell $kind={editing ? 'argument' : 'lookup'}>
        {name}
        {editing ? (
          <>
            <Edge $sides="tlbr" $c={BLUE} />
            {['tl', 'tr', 'bl', 'br'].map(at => <Handle key={at} $at={at} $c={BLUE} />)}
          </>
        ) : <OuterLeft />}
      </Cell>
      <Cell $kind="lookup">{area}</Cell>
      <Cell $kind="lookup" $align={editing ? 'left' : 'right'}>
        {amount}
        {editing && <><Edge $sides="tlbr" $c={GREEN} /><Handle $at="br" $c={GREEN} /></>}
      </Cell>
    </>
  );
};

const Worksheet = () => (
  <Sheet>
    <GridPane>
      <GridTable>
        <colgroup>
          <col width={40} />
          {COLUMNS.map(([name, width]) => <col key={name} width={width} />)}
        </colgroup>
        <thead>
          <tr>
            <Corner><Icon w={18} h={18}><path d="M18 0v18H0z" fill="#b4b4b4" stroke="none" /></Icon></Corner>
            {COLUMNS.map(([name]) => <ColHead key={name} $active={name === 'H'}>{name}</ColHead>)}
          </tr>
        </thead>
        <tbody>
          <tr>
            <RowHead><RowNumber $h={70}>1</RowNumber></RowHead>
            <Blank />
            <BannerCell colSpan={6}>存在重复结果，vlookup怎么正确查找</BannerCell>
            <Blank colSpan={4} />
          </tr>
          <tr>
            <RowHead><RowNumber $h={14}>2</RowNumber></RowHead>
            <Blank colSpan={11} />
          </tr>
          <tr>
            <RowHead><RowNumber $h={27}>3</RowNumber></RowHead>
            <Blank />
            <HeadCell $kind="range">销售人员<Edge $sides="l" $c={RED} /><Handle $at="tl" $c={RED} /></HeadCell>
            <HeadCell $kind="range">区域</HeadCell>
            <HeadCell $kind="range">销售额<Edge $sides="r" $c={RED} /><Handle $at="tr" $c={RED} /></HeadCell>
            <Blank />
            <HeadCell $kind="lookup">销售人员<OuterLeft /></HeadCell>
            <HeadCell $kind="lookup">区域</HeadCell>
            <HeadCell $kind="lookup">销售额</HeadCell>
            <Blank colSpan={3} />
          </tr>
          {SALES.map(([name, area], i) => (
            <tr key={i}>
              <RowHead $active={i === 0}><RowNumber $h={ROW_HEIGHTS[i]}>{i + 4}</RowNumber></RowHead>
              <Cell>{name + area}</Cell>
              <SalesCells index={i} />
              <Blank />
              {i < LOOKUPS.length ? <LookupCells index={i} /> : <Blank colSpan={3} />}
              <Blank colSpan={3} />
            </tr>
          ))}
          <tr>
            <RowHead><RowNumber $h={28}>14</RowNumber></RowHead>
            <Blank colSpan={11} />
          </tr>
        </tbody>
      </GridTable>
    </GridPane>
    <ScrollColumn>
      <ScrollButton aria-label="向上滚动"><Icon w={6} h={4}><path d="M0 4h6L3 0z" fill="currentColor" stroke="none" /></Icon></ScrollButton>
      <VTrack><VThumb /></VTrack>
      <ScrollButton aria-label="向下滚动"><Icon w={6} h={4}><path d="M0 0h6L3 4z" fill="currentColor" stroke="none" /></Icon></ScrollButton>
    </ScrollColumn>
  </Sheet>
);

const BottomBars = () => (
  <>
    <SheetTabs>
      <TabArrow $w={54} aria-label="上一张"><Icon w={4} h={6}><path d="M4 0v6L0 3z" fill="currentColor" stroke="none" /></Icon></TabArrow>
      <TabArrow $w={26} aria-label="下一张"><Icon w={4} h={6}><path d="M0 0v6l4-3z" fill="currentColor" stroke="none" /></Icon></TabArrow>
      <SheetTab>销售数据</SheetTab>
      <AddSheet aria-label="新工作表"><Icon w={16}><circle cx="8" cy="8" r="7" /><path d="M8 4.500v7M4.500 8h7" strokeWidth={1.6} /></Icon></AddSheet>
      <HScroll>
        <Icon w={20} h={12} color="#a5a5a5" sw={2}><path d="M7 0v12" strokeDasharray="2 3" /></Icon>
        <ScrollButton aria-label="向左滚动"><Icon w={4} h={6}><path d="M4 0v6L0 3z" fill="currentColor" stroke="none" /></Icon></ScrollButton>
        <HTrack><HThumb /></HTrack>
        <ScrollButton aria-label="向右滚动"><Icon w={4} h={6}><path d="M0 0v6l4-3z" fill="currentColor" stroke="none" /></Icon></ScrollButton>
      </HScroll>
    </SheetTabs>
    <StatusBar>
      编辑
      <StatusIcon $ml={18}>
        <Icon w={14} h={13} color="#666"><path d="M6 11.500H.5v-11h12V5M.5 3h12M3 5.500h3M3 8h2" /><circle cx="9.500" cy="8.500" r="3.500" /><circle cx="9.500" cy="8.500" r="1" fill="#666" /></Icon>
      </StatusIcon>
      <StatusIcon $ml={16}>
        <Icon w={14} h={13} color="#666"><circle cx="6" cy="2" r="1.500" /><path d="M1 3q5 3 10 0M4 5v3l-2 4M8 5v2M7 10l2 2 4-5" /></Icon>
      </StatusIcon>
      <StatusIcon $ml={3}>辅助功能: 一切就绪</StatusIcon>
      <StatusRight>
        <ViewButton aria-label="普通"><Icon w={13} h={12}><path d="M.5.5h12v11H.5zM.5 4h12M.5 8h12M4.500.5v11M8.500.5v11" /></Icon></ViewButton>
        <ViewButton aria-label="页面布局"><Icon w={13} h={12}><path d="M.5.5h12v11H.5zM3 .5v11M10 .5v11M4.500 3h4M4.500 5h4M4.500 7h4M4.500 9h4" /></Icon></ViewButton>
        <ViewButton aria-label="分页预览"><Icon w={13} h={12}><path d="M.5.5h12v11H.5zM.5 6h8V.5M4.500.5V6" /></Icon></ViewButton>
        <button aria-label="缩小"><Icon w={12} h={12}><path d="M2 6h7" /></Icon></button>
        <ZoomSlider type="range" min={10} max={290} defaultValue={150} aria-label="显示比例" />
        <button aria-label="放大"><Icon w={10} h={12}><path d="M1 6h7M4.500 2.500v7" /></Icon></button>
        <ZoomValue>150%</ZoomValue>
      </StatusRight>
    </StatusBar>
  </>
);

const WindowsTaskbar = () => (
  <Taskbar>
    <TaskButton aria-label="开始菜单">
      <Icon w={16}><path d="m0 2.500 7-1v6H0zM8 1.300 16 0v7.500H8zM0 8.500h7v6l-7-1zM8 8.500h8V16l-8-1.300z" fill="#f4f7f8" stroke="none" /></Icon>
    </TaskButton>
    <TaskButton aria-label="搜索"><SearchIcon size={22} color="#eef3f5" sw={1.2} /></TaskButton>
    <TaskButton aria-label="任务视图">
      <Icon w={16} color="#d5dcdf" sw={1.2}><path d="M1 0v3h9V0M1 5.500h9v5H1zM1 16v-3h9v3M13.500 0v3M13.500 8v8" /><path d="M12 5.500h3" strokeWidth={2} /></Icon>
    </TaskButton>
    <TaskButton $open aria-label="文件资源管理器">
      <Icon w={22} h={20}><g stroke="none"><path d="M1 2q0-1 1-1h6l2 2h10q1 0 1 1v14H1z" fill="#e0a92e" /><path d="M1 5h20v13H1z" fill="#ffd664" /><path d="M4 19v-7q0-1 1-1h12q1 0 1 1v7h-4v-4H8v4z" fill="#3e95d6" /></g></Icon>
    </TaskButton>
    <TaskButton aria-label="浏览器">
      <Icon w={22}>
        <g stroke="none">
          <path d="M11 11 1.500 5.500A11 11 0 0 1 20.500 5.500H11z" fill="#e2453a" />
          <path d="M11 11 1.500 5.500A11 11 0 0 0 11 22l5-8z" fill="#2da453" />
          <path d="M11 5.500h9.500A11 11 0 0 1 11 22l5-8z" fill="#fbc51c" />
          <circle cx="11" cy="11" r="5.200" fill="#fff" /><circle cx="11" cy="11" r="4.200" fill="#3c7ff0" />
        </g>
      </Icon>
    </TaskButton>
    <TaskButton $open aria-label="网页浏览器">
      <Icon w={24} h={22}>
        <g stroke="none">
          <circle cx="12.500" cy="11" r="11" fill="#2c86d3" />
          <path d="M2 9C4-3 23-2 23.500 9c0 5-7 6-9 3 2-5-6-8-12.500-3z" fill="#44c8a0" />
          <path d="M2 9C4-2 15-2 19 3c-6-2-12-1-17 6z" fill="#35b6dc" />
          <path d="M14 11q1 5 9 3l-3 4q-7 3-9-3 0-3 3-4z" fill="#20343e" />
          <path d="M1 14h11v8H1z" fill="#e89a2b" /><path d="M1 17h11v1.500H1zM4 12h5v2H4z" fill="#9c5a16" />
        </g>
      </Icon>
    </TaskButton>
    <TaskButton $open aria-label="办公软件">
      <Icon w={24} h={18} color="#e43b31" sw={2.6}><path d="M1 2h7l4 8M2 2l6 13 7-13M11 8l4 7 7-13h-7" /></Icon>
    </TaskButton>
    <TaskButton $open aria-label="微信">
      <Icon w={24} h={20}>
        <g stroke="none">
          <ellipse cx="9" cy="8" rx="8.500" ry="7.500" fill="#3cc268" /><path d="m3 12-1 5 5-3z" fill="#3cc268" />
          <circle cx="6" cy="6" r="1.200" fill="#1f5a35" /><circle cx="12" cy="6" r="1.200" fill="#1f5a35" />
          <ellipse cx="16.500" cy="13" rx="7" ry="6" fill="#eef2f0" /><path d="m19 18 3 2v-4z" fill="#eef2f0" />
          <circle cx="14.500" cy="11.500" r="1" fill="#777" /><circle cx="19" cy="11.500" r="1" fill="#777" />
        </g>
      </Icon>
    </TaskButton>
    <TaskButton $open $active aria-label="电子表格">
      <Icon w={22} h={20}>
        <g stroke="none">
          <path d="M7 0h14q1 0 1 1v18q0 1-1 1H7z" fill="#21a366" /><path d="M7 10h15v9q0 1-1 1H7z" fill="#185c37" /><path d="M15 5h7v5h-7z" fill="#33c481" />
          <path d="M7 5h8v5H7z" fill="#107c41" /><path d="M0 5h12v11H0z" fill="#107c41" />
        </g>
        <path d="m4 7.500 4 6M8 7.500l-4 6" stroke="#fff" strokeWidth={1.5} />
      </Icon>
    </TaskButton>
    <AssistantBall />
    <Tray>
      <Weather>
        <Icon w={24} h={22}>
          <g stroke="none">
            <circle cx="13" cy="11" r="8.500" fill="#f09a35" />
            <path d="M3 8a3 3 0 0 1 1-6q3-3 6 0 4 1 2 6z" fill="#c6dcf2" />
            <path d="M13 20a3 3 0 0 1 1-5q4-3 6 0 4 1 2 5z" fill="#d5e2f3" />
          </g>
        </Icon>
        <span>35°C</span><span>局部晴朗</span>
      </Weather>
      <TrayButton $w={22} aria-label="隐藏的图标"><Icon w={12} h={8} sw={1.4}><path d="m1 6.500 5-5 5 5" /></Icon></TrayButton>
      <TrayButton $w={22} aria-label="电池">
        <Icon w={16} h={12} sw={1.3}><path d="M5 3h9v7H4V7M14.500 5v3M1 1h3v3q-1.500 2-3 0zM2.500 5v4" /><path d="M6 5h6v3H6z" fill="currentColor" /></Icon>
      </TrayButton>
      <TrayButton $w={23} aria-label="网络">
        <Icon w={13} h={13} sw={1.3}><path d="M1 12A11 11 0 0 1 12 1M4 12a8 8 0 0 1 8-8M7 12a5 5 0 0 1 5-5" /><circle cx="11" cy="11" r="1.500" fill="currentColor" /></Icon>
      </TrayButton>
      <TrayButton $w={22} aria-label="音量">
        <Icon w={16} h={13} sw={1.2}><path d="M1 4.500h2.500L7 1.500v10l-3.500-3H1zM9 4.500q1.500 2 0 4M11 3q3 3.500 0 7M13 1.500q4 5 0 10" /></Icon>
      </TrayButton>
      <TrayButton $w={22} aria-label="麦克风">
        <Icon w={11} h={15} sw={1.2}><rect x="3" y="1" width="5" height="8.500" rx="1" fill="currentColor" /><path d="M1 7v3q0 1.500 1.500 1.500h6Q10 11.500 10 10V7M5.500 11.500V14M3 14.300h5" /></Icon>
      </TrayButton>
      <TrayButton $w={22} aria-label="输入法">中</TrayButton>
      <Clock>13:50<br />2023/9/30</Clock>
      <TrayButton $w={38} aria-label="通知">
        <Icon w={16} h={16} sw={1.2}><path d="M1 1h14v11h-4v3l-3-3H1z" /></Icon>
      </TrayButton>
      <TrayButton $w={7} aria-hidden="true" tabIndex={-1} />
      <ShowDesktop aria-label="显示桌面" />
    </Tray>
  </Taskbar>
);

export default function App() {
  return (
    <>
      <GlobalStyle />
      <Page>
        <TopBar />
        <Tabs />
        <RibbonBar />
        <Formula />
        <Worksheet />
        <BottomBars />
        <WindowsTaskbar />
        <LevelMeter><i /></LevelMeter>
        <Caption>那么他的查找值就不是销售人员了</Caption>
      </Page>
    </>
  );
}
